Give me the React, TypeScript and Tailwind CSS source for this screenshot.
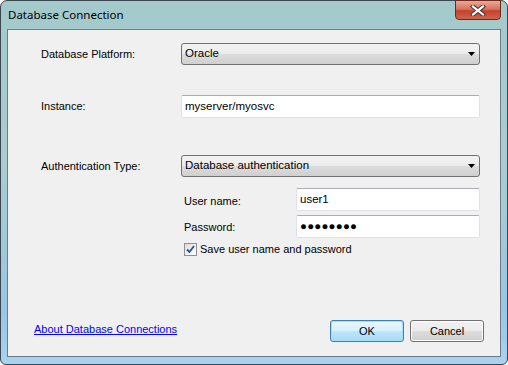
import React from "react";

const font = { fontFamily: '"Liberation Sans", Arial, sans-serif' };

function Combo({ text }: { text: string }) {
  return (
    <div className="relative flex h-[22px] w-[299px] items-center rounded-[3px] border border-[#707070] bg-[linear-gradient(180deg,#f3f3f3_0%,#ebebeb_50%,#dddddd_51%,#cfcfcf_100%)] pl-[3px] text-[11.5px] text-black">
      <span>{text}</span>
      <svg className="absolute right-[4px] top-[8px]" width="7" height="4" viewBox="0 0 7 4">
        <path d="M0 0H7L3.5 4Z" fill="#000" />
      </svg>
    </div>
  );
}

function TextBox({ w, children }: { w: string; children: React.ReactNode }) {
  return (
    <div
      className={`flex h-[23px] ${w} items-center rounded-[2px] border border-[#dfe3e8] border-t-[#abadb3] bg-white pl-[3px] text-[11.5px] text-black`}
    >
      {children}
    </div>
  );
}

export default function App() {
  return (
    <div className="h-[365px] w-[508px] bg-white" style={font}>
      <div className="relative flex h-[365px] w-[508px] flex-col rounded-t-[7px] rounded-b-[6px] border border-[#3a4650] bg-[linear-gradient(180deg,#a4c9cb_0%,#a9cdd0_45%,#98c6e4_85%,#a8d2f0_100%)] px-[6px] pb-[7px] pt-[28px]">
        <div className="absolute left-[7px] top-[6px] text-[11.5px] leading-[16px] text-black" style={{ fontFamily: '"Noto Sans", "Liberation Sans", sans-serif' }}>
          Database Connection
        </div>
        <div className="absolute right-[6px] top-[-1px] flex h-[20px] w-[46px] items-center justify-center rounded-b-[4px] border border-[#6b2a20] bg-[linear-gradient(180deg,#e9a996_0%,#d9725e_45%,#c6432c_55%,#d2624a_100%)]">
          <svg width="16" height="11" viewBox="0 0 16 11">
            <path d="M3 1.5L13 9.5M13 1.5L3 9.5" stroke="#3b3b3b" strokeWidth="4.2" strokeLinecap="square" />
            <path d="M3 1.5L13 9.5M13 1.5L3 9.5" stroke="#ffffff" strokeWidth="2.2" strokeLinecap="square" />
          </svg>
        </div>
        <div className="flex flex-1 flex-col border border-[#6d7c88] bg-[#f0f0f0] text-[11px] text-black">
          <div className="ml-[33px] mt-[13px] flex items-center">
            <div className="w-[140px]">Database Platform:</div>
            <Combo text="Oracle" />
          </div>
          <div className="ml-[33px] mt-[30px] flex items-center">
            <div className="w-[140px]">Instance:</div>
            <TextBox w="w-[299px]">myserver/myosvc</TextBox>
          </div>
          <div className="ml-[33px] mt-[37px] flex items-center">
            <div className="w-[140px]">Authentication Type:</div>
            <Combo text="Database authentication" />
          </div>
          <div className="ml-[176px] mt-[11px] flex items-center">
            <div className="w-[112px] pt-[3px]">User name:</div>
            <TextBox w="w-[184px]">user1</TextBox>
          </div>
          <div className="ml-[176px] mt-[4px] flex items-center">
            <div className="w-[112px] pt-[2px]">Password:</div>
            <TextBox w="w-[184px]">
              <span className="text-[11.5px] tracking-[0.2px]">●●●●●●●●</span>
            </TextBox>
          </div>
          <div className="ml-[176px] mt-[3px] flex items-center">
            <div className="flex h-[13px] w-[13px] items-center justify-center border border-[#8e8f8f] bg-[linear-gradient(135deg,#dcdcdc,#ffffff)]">
              <svg width="9" height="9" viewBox="0 0 9 9">
                <path d="M1 4.5L3.5 7L8 1" stroke="#2a4f8a" strokeWidth="1.8" fill="none" />
              </svg>
            </div>
            <span className="ml-[3px]">Save user name and password</span>
          </div>
          <div className="mb-[14px] mt-auto flex items-end pr-[16px]">
            <a className="mb-[5px] ml-[26px] text-[#0000ff] underline underline-offset-[1px]" href="#">
              About Database Connections
            </a>
            <div className="flex-1" />
            <button className="h-[22px] w-[74px] rounded-[3px] border border-[#3c7fb1] bg-[linear-gradient(180deg,#eaf6fd_0%,#d9f0fc_50%,#bee6fd_51%,#a7d9f5_100%)] text-[11px] shadow-[inset_0_0_0_1px_#9ee0fd]">
              OK
            </button>
            <button className="ml-[6px] h-[22px] w-[74px] rounded-[3px] border border-[#707070] bg-[linear-gradient(180deg,#f2f2f2_0%,#ebebeb_50%,#dddddd_51%,#cfcfcf_100%)] text-[11px] shadow-[inset_0_0_0_1px_#fcfcfc]">
              Cancel
            </button>
          </div>
        </div>
      </div>
    </div>
  );
}
